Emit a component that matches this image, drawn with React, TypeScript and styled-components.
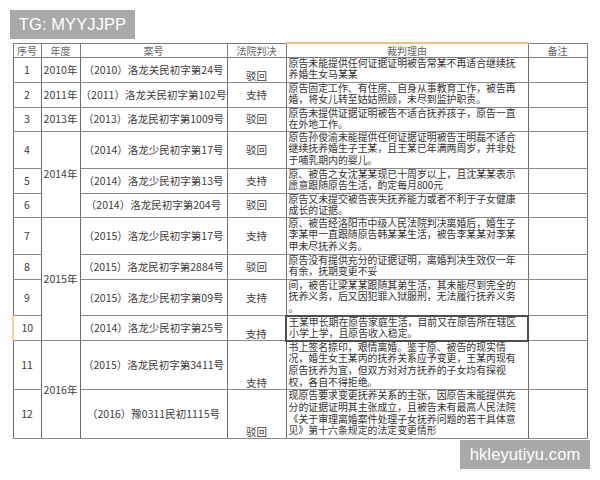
import React from 'react';
import styled, { createGlobalStyle } from 'styled-components';

const GlobalStyle = createGlobalStyle`
  * {
    box-sizing: border-box;
    margin: 0;
    padding: 0;
  }

  body {
    width: 600px;
    height: 480px;
    overflow: hidden;
    background: #ffffff;
    font-family: "Noto Sans CJK SC", "Noto Sans", sans-serif;
  }
`;

const Page = styled.div`
  position: relative;
  width: 600px;
  height: 480px;
  padding: 42px 14px 0 12px;
  background: #fdfdfd;
`;

const Watermark = styled.div<{ $top: number; $left: number; $w: number }>`
  position: absolute;
  top: ${(p) => p.$top}px;
  left: ${(p) => p.$left}px;
  width: ${(p) => p.$w}px;
  height: 29px;
  display: flex;
  align-items: center;
  justify-content: center;
  background: #a9a9a9;
  color: #ffffff;
  font-family: "Liberation Sans", Arial, sans-serif;
  font-size: 16.5px;
  letter-spacing: 0.1px;
  z-index: 2;
`;

const Table = styled.table`
  width: 574px;
  border-collapse: collapse;
  table-layout: fixed;
  border: 1px solid #6a6a6a;
  background: #ffffff;
  color: #3c3c3c;
`;

const HeadCell = styled.th<{ $accent?: boolean }>`
  height: 14px;
  padding: 0;
  font-size: 10px;
  line-height: 11px;
  font-weight: normal;
  color: #666666;
  text-align: center;
  vertical-align: middle;
  border: 1px solid #7c7c7c;
  border-top: ${(p) => (p.$accent ? '2px solid #f1c27c' : '1px solid #7c7c7c')};
`;

const Row = styled.tr<{ $h: number }>`
  height: ${(p) => p.$h}px;
`;

const Cell = styled.td<{ $bottom?: boolean; $mark?: boolean }>`
  padding: 0;
  font-size: 10.5px;
  line-height: 12px;
  text-align: center;
  vertical-align: ${(p) => (p.$bottom ? 'bottom' : 'middle')};
  border-top: 1px solid #8a8a8a;
  border-bottom: 1px solid #8a8a8a;
  border-left: ${(p) => (p.$mark ? '2px solid #f3cf9e' : '1px solid #6c6c6c')};
  border-right: 1px solid #6c6c6c;
  white-space: nowrap;
`;

const ReasonCell = styled.td<{ $framed?: boolean }>`
  padding: 0 0 0 2px;
  font-size: 9.9px;
  line-height: 11.6px;
  text-align: left;
  vertical-align: top;
  color: #333333;
  border-left: ${(p) => (p.$framed ? '2px solid #4e4e4e' : '1px solid #6c6c6c')};
  border-right: ${(p) => (p.$framed ? '2px solid #4e4e4e' : '1px solid #6c6c6c')};
  border-top: ${(p) => (p.$framed ? '2px solid #4e4e4e' : '1px solid #8a8a8a')};
  border-bottom: ${(p) => (p.$framed ? '2px solid #4e4e4e' : '1px solid #8a8a8a')};
`;

const ReasonLine = styled.div`
  height: 11.6px;
  white-space: nowrap;
`;

type Verdict = {
  no: number;
  year?: string;
  yearSpan?: number;
  caseNo: string;
  verdict: string;
  bottom?: boolean;
  h: number;
  reason: string[];
  framed?: boolean;
  mark?: boolean;
};

const rows: Verdict[] = [
  {
    no: 1,
    year: '2010年',
    yearSpan: 1,
    caseNo: '（2010）洛龙关民初字第24号',
    verdict: '驳回',
    bottom: true,
    h: 25,
    reason: ['原告未能提供任何证据证明被告常某不再适合继续抚', '养婚生女马某某'],
  },
  {
    no: 2,
    year: '2011年',
    yearSpan: 1,
    caseNo: '（2011）洛龙关民初字第102号',
    verdict: '支持',
    h: 25,
    reason: ['原告固定工作、有住房、自身从事教育工作，被告再', '婚，将女儿转至姑姑照顾，未尽到监护职责。'],
  },
  {
    no: 3,
    year: '2013年',
    yearSpan: 1,
    caseNo: '（2013）洛龙民初字第1009号',
    verdict: '驳回',
    h: 24,
    reason: ['原告未提供证据证明被告不适合抚养孩子，原告一直', '在外地工作。'],
  },
  {
    no: 4,
    year: '2014年',
    yearSpan: 3,
    caseNo: '（2014）洛龙少民初字第17号',
    verdict: '驳回',
    h: 37,
    reason: [
      '原告孙俊渝未能提供任何证据证明被告王明磊不适合',
      '继续抚养婚生子王某，且王某已年满两周岁，并非处',
      '于哺乳期内的婴儿。',
    ],
  },
  {
    no: 5,
    caseNo: '（2014）洛龙少民初字第13号',
    verdict: '支持',
    h: 25,
    reason: ['原、被告之女沈某某现已十周岁以上，且沈某某表示', '愿意跟随原告生活，酌定每月800元'],
  },
  {
    no: 6,
    caseNo: '（2014）洛龙民初字第204号',
    verdict: '驳回',
    h: 24,
    reason: ['原告又未提交被告丧失抚养能力或者不利于子女健康', '成长的证据。'],
  },
  {
    no: 7,
    year: '2015年',
    yearSpan: 4,
    caseNo: '（2015）洛龙少民初字第17号',
    verdict: '支持',
    h: 37,
    reason: [
      '原、被告经洛阳市中级人民法院判决离婚后，婚生子',
      '李某甲一直跟随原告韩某某生活，被告李某某对李某',
      '甲未尽抚养义务。',
    ],
  },
  {
    no: 8,
    caseNo: '（2015）洛龙民初字第2884号',
    verdict: '驳回',
    h: 25,
    reason: ['原告没有提供充分的证据证明，离婚判决生效仅一年', '有余，抚期变更不妥'],
  },
  {
    no: 9,
    caseNo: '（2015）洛龙少民初字第09号',
    verdict: '支持',
    h: 36,
    reason: [
      '间，被告让梁某某跟随其弟生活，其未能尽到完全的',
      '抚养义务，后又因犯罪入狱服刑，无法履行抚养义务',
      '。',
    ],
  },
  {
    no: 10,
    caseNo: '（2014）洛龙少民初字第25号',
    verdict: '支持',
    bottom: true,
    h: 25,
    framed: true,
    mark: true,
    reason: ['王某甲长期在原告家庭生活，目前又在原告所在辖区', '小学上学，且原告收入稳定。'],
  },
  {
    no: 11,
    year: '2016年',
    yearSpan: 2,
    caseNo: '（2015）洛龙民初字第3411号',
    verdict: '支持',
    bottom: true,
    h: 49,
    reason: [
      '书上签名捺印，艰情离婚。鉴于原、被告的现实情',
      '况，婚生女王某丙的抚养关系应予变更，王某丙现有',
      '原告抚养为宜，但双方对对方抚养的子女均有探视',
      '权，各自不得拒绝。',
    ],
  },
  {
    no: 12,
    caseNo: '（2016）豫0311民初1115号',
    verdict: '驳回',
    bottom: true,
    h: 49,
    reason: [
      '现原告要求变更抚养关系的主张，因原告未能提供充',
      '分的证据证明其主张成立，且被告未有最高人民法院',
      '《关于审理离婚案件处理子女抚养问题的若干具体意',
      '见》第十六条规定的法定变更情形',
    ],
  },
];

export default function App() {
  return (
    <>
      <GlobalStyle />
      <Page>
        <Watermark $top={10} $left={10} $w={125}>
          TG: MYYJJPP
        </Watermark>
        <Table>
          <colgroup>
            <col style={{ width: 28 }} />
            <col style={{ width: 39 }} />
            <col style={{ width: 147 }} />
            <col style={{ width: 59 }} />
            <col style={{ width: 242 }} />
            <col style={{ width: 59 }} />
          </colgroup>
          <thead>
            <tr>
              <HeadCell>序号</HeadCell>
              <HeadCell>年度</HeadCell>
              <HeadCell>案号</HeadCell>
              <HeadCell>法院判决</HeadCell>
              <HeadCell $accent>裁判理由</HeadCell>
              <HeadCell>备注</HeadCell>
            </tr>
          </thead>
          <tbody>
            {rows.map((r) => (
              <Row key={r.no} $h={r.h}>
                <Cell $mark={r.mark}>{r.no}</Cell>
                {r.year && <Cell rowSpan={r.yearSpan}>{r.year}</Cell>}
                <Cell>{r.caseNo}</Cell>
                <Cell $bottom={r.bottom}>{r.verdict}</Cell>
                <ReasonCell $framed={r.framed}>
                  {r.reason.map((line, i) => (
                    <ReasonLine key={i}>{line}</ReasonLine>
                  ))}
                </ReasonCell>
                <Cell />
              </Row>
            ))}
          </tbody>
        </Table>
        <Watermark $top={440} $left={460} $w={130}>
          hkleyutiyu.com
        </Watermark>
      </Page>
    </>
  );
}
